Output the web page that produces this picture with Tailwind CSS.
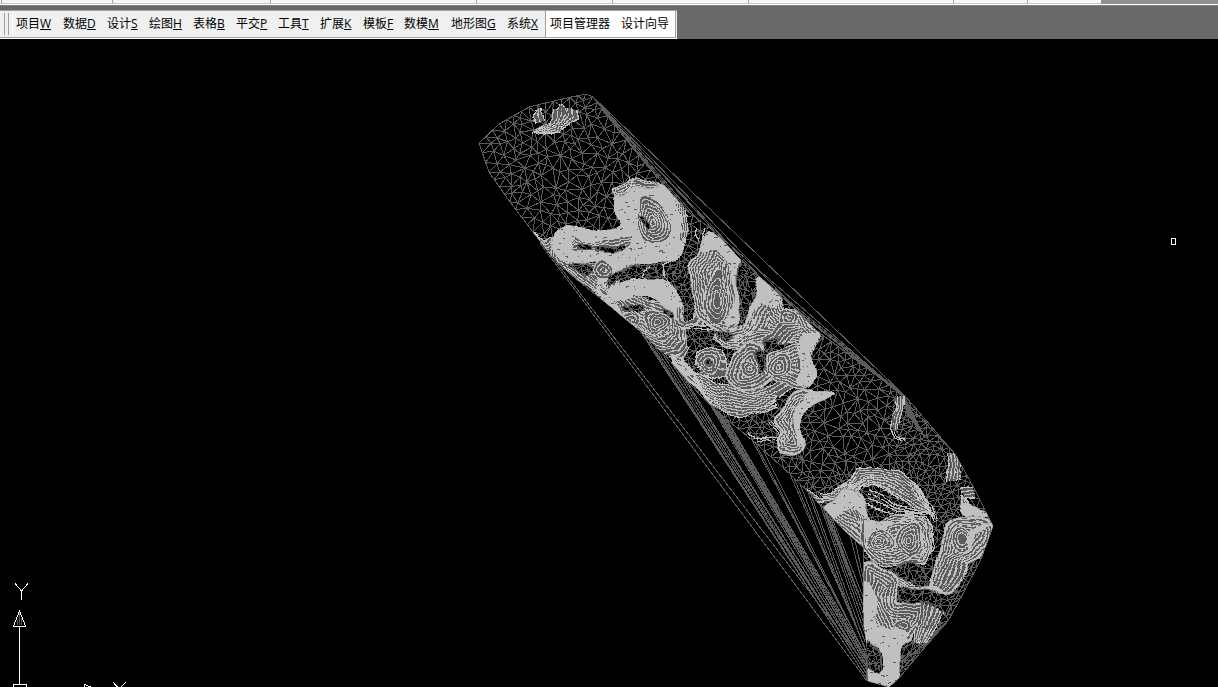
<!DOCTYPE html>
<html lang="zh-CN">
<head>
<meta charset="utf-8">
<title>项目管理器</title>
<script src="https://cdn.jsdelivr.net/npm/@tailwindcss/browser@4"></script>
</head>
<body class="w-[1218px] h-[687px] overflow-hidden bg-black flex flex-col font-['Open_Sans','Noto_Sans_CJK_SC',sans-serif]">
<div class="h-[5px] shrink-0 bg-[#f7f7f7] border-b border-white flex">
  <div class="w-0.5 h-1 border-r border-[#a0a0a0]"></div>
  <div class="w-[111px] h-1 border-r border-b border-r-[#a0a0a0] border-b-[#c8c8c8]"></div>
  <div class="w-[158px] h-1 border-r border-b border-r-[#a0a0a0] border-b-[#c8c8c8]"></div>
  <div class="w-[206px] h-1 border-r border-b border-r-[#a0a0a0] border-b-[#c8c8c8]"></div>
  <div class="w-[136px] h-1 border-r border-b border-r-[#a0a0a0] border-b-[#c8c8c8]"></div>
  <div class="w-[136px] h-1 border-r border-b border-r-[#a0a0a0] border-b-[#c8c8c8]"></div>
  <div class="w-[205px] h-1 border-r border-b border-r-[#a0a0a0] border-b-[#c8c8c8]"></div>
  <div class="w-[74px] h-1 border-r border-b border-r-[#a0a0a0] border-b-[#c8c8c8]"></div>
  <div class="w-[73px] h-1 border-b border-b-[#c8c8c8]"></div>
  <div class="flex-1 h-1 bg-[#909090]"></div>
</div>
<div class="h-[34px] shrink-0 bg-[#696969] border-t border-[#808080] pt-1">
  <nav class="w-[677px] h-[29px] bg-[#f0f0f0] border-t border-t-[#a0a0a0] border-b border-b-white flex text-[12px] leading-[25px] text-black whitespace-nowrap">
    <div class="w-4 shrink-0 flex gap-[3px] pl-1 py-0.5 border-b border-[#a0a0a0]"><i class="w-px h-[22px] bg-[#a0a0a0]"></i><i class="w-px h-[22px] bg-[#a0a0a0]"></i><i class="w-px h-[22px] bg-white"></i></div>
    <div class="flex w-[529px] shrink-0 border-b border-[#a0a0a0]">
      <span class="w-[47px]">项目<u>W</u></span><span class="w-[44px]">数据<u>D</u></span><span class="w-[42px]">设计<u>S</u></span><span class="w-[44px]">绘图<u>H</u></span><span class="w-[43px]">表格<u>B</u></span><span class="w-[42px]">平交<u>P</u></span><span class="w-[42px]">工具<u>T</u></span><span class="w-[43px]">扩展<u>K</u></span><span class="w-[41px]">模板<u>F</u></span><span class="w-[47px]">数模<u>M</u></span><span class="w-[56px]">地形图<u>G</u></span><span>系统<u>X</u></span>
    </div>
    <div class="flex w-[131px] bg-white border-l border-r border-b border-[#a0a0a0] pl-1"><span class="w-[71px]">项目管理器</span><span>设计向导</span></div>
  </nav>
</div>
<main class="h-[648px] shrink-0">
<svg id="map" class="block w-[1218px] h-[648px]" viewBox="0 39 1218 648" shape-rendering="crispEdges" fill="none">
  <defs>
    <clipPath id="core"><path id="coreShape"/></clipPath>
    <filter id="rough" filterUnits="userSpaceOnUse" x="470" y="85" width="530" height="602" color-interpolation-filters="sRGB">
      <feTurbulence type="fractalNoise" baseFrequency="0.055" numOctaves="1" seed="4"/>
      <feDisplacementMap in="SourceGraphic" scale="10" xChannelSelector="R" yChannelSelector="G"/>
    </filter>
  </defs>
  <g id="fans" stroke="#5c5c5c"></g>
  <path id="mesh" stroke="#5c5c5c"/>
  <g clip-path="url(#core)"><g id="relief" filter="url(#rough)"></g></g>
  <g stroke="#fff">
    <path d="M15.5 583v1l6 7v9M27.5 583v1l-6 7M19.5 626v59M13.500 684.500h13v8h-13zM13 626.500h13M13.500 626l6-15 6 15M84.500 690v-5.500l10 4M113 682l6 7 7-7"/>
    <path d="M17.500 625v-5M19.500 612v13M21.500 625v-7" stroke="#5c5c5c"/>
    <path d="M1171.500 238.500h4v6h-4z"/>
  </g>
</svg>
</main>
<script>
const LIGHT = '#c0c0c0', DARK = '#5c5c5c';
let seed = 20;
const rnd = () => (seed = (seed * 16807) % 2147483647) / 2147483647;
const pts = s => s.trim().split(/\s+/).map(p => p.split(',').map(Number));
const NS = 'http://www.w3.org/2000/svg';
const relief = document.getElementById('relief');
const add = (parent, name, attrs) => {
  const e = document.createElementNS(NS, name);
  for (const k in attrs) e.setAttribute(k, attrs[k]);
  parent.appendChild(e);
  return e;
};
const line = p => 'M' + p.map(q => q.join(' ')).join('L');
// Closed curve through every point
const smooth = p => {
  const n = p.length, at = i => p[(i + n) % n], k = 7;
  let d = 'M' + p[0].join(' ');
  for (let i = 0; i < n; i++) {
    const a = at(i - 1), b = at(i), c = at(i + 1), e = at(i + 2);
    d += `C${b[0] + (c[0] - a[0]) / k} ${b[1] + (c[1] - a[1]) / k} ${c[0] - (e[0] - b[0]) / k} ${c[1] - (e[1] - b[1]) / k} ${c[0]} ${c[1]}`;
  }
  return d + 'Z';
};
const inside = (p, x, y) => {
  let r = false;
  for (let i = 0, j = p.length - 1; i < p.length; j = i++)
    if ((p[i][1] > y) !== (p[j][1] > y) && x < (p[j][0] - p[i][0]) * (y - p[i][1]) / (p[j][1] - p[i][1]) + p[i][0]) r = !r;
  return r;
};

// Survey boundary
const core = pts('479,143 499,124 529,107 562,99 586,94 593,97 602,108 620,132 645,163 686,210 715,232 738,257 762,279 790,304 817,331 860,362 905,396 955,454 975,490 993,526 981,559 965,590 948,621 920,653 900,677 889,687 868,681 866,640 863,620 864,548 845,531 810,494 790,474 752,440 725,418 700,395 672,363 640,331 600,298 570,274 553,258 533,232 510,202 489,172');
document.getElementById('coreShape').setAttribute('d', line(core) + 'Z');

// Long thin triangles on both sides of the boundary
const fans = document.getElementById('fans');
const seg = (a, b, c, d) => add(fans, 'path', {d: `M${a} ${b}L${c} ${d}`});
seg(540, 243, 867, 681);
seg(550, 254, 868, 668);
[[640,331],[643,334],[649,341],[655,347],[660,350],[671,362],[675,365],[681,372],[708,401],[711,404],[714,408],[717,411],[719,413],[721,415],[723,417],[752,440],[756,444],[763,450],[790,474],[794,478],[800,484]].forEach(([x, y], i) => seg(x, y, 868 - i % 3, 680 - i * 1.4));
[[719,413],[722,416],[725,418],[727,420]].forEach(([x, y], i) => { seg(x, y, 866, 664 - i * 3); });
[[808,492],[811,495],[820,504],[823,508],[826,512],[829,515],[832,518],[850,535],[855,540]].forEach(([x, y], i) => seg(x, y, 865, 650 - i * 8));
[[823,508],[826,511],[829,514]].forEach(([x, y]) => seg(x, y, 863, 605));
for (let y = 640; y < 680; y += 3) seg(866, y, 868, 681);
[[593,97,905,396],[600,106,715,232],[600,106,700,222],[602,108,738,257],[602,110,690,213],[604,112,665,186],[606,114,762,279],[600,105,817,331],[715,232,900,393],[762,279,905,396],[780,296,905,397],[790,304,902,396],[805,318,905,396],[817,331,900,393],[905,396,955,454],[903,399,948,447],[990,532,946,618],[986,532,944,616],[948,621,899,672],[948,621,900,660],[944,622,902,650],[940,628,899,668],[936,634,899,678],[930,640,899,664]].forEach(s => seg(...s));
add(fans, 'path', {d: 'M905 398L925 438L907 412Z', fill: DARK});

// Delaunay triangulation of scattered survey points
const P = [];
for (let i = 0; i < core.length; i++) {
  const a = core[i], b = core[(i + 1) % core.length], n = Math.max(1, Math.round(Math.hypot(a[0] - b[0], a[1] - b[1]) / 9));
  for (let k = 0; k < n; k++) P.push([a[0] + (b[0] - a[0]) * k / n + rnd() * .1, a[1] + (b[1] - a[1]) * k / n + rnd() * .1]);
}
const gap = (x, y) => y < 235 ? 9.2 : (x > 800 && y < 470 && x < 890) ? 9.2 : (y < 450 ? 5.4 : 5.8);
for (let t = 0; t < 30000; t++) {
  const x = 478 + rnd() * 516, y = 94 + rnd() * 592;
  if (!inside(core, x, y)) continue;
  const g = gap(x, y) * (.62 + rnd() * .6);
  if (P.every(q => (q[0] - x) ** 2 + (q[1] - y) ** 2 > g * g)) P.push([x, y]);
}
P.sort((a, b) => a[0] - b[0]);
const N = P.length, Q = P.concat([[-5000, -5000], [6000, -5000], [700, 9000]]);
const tri = (a, b, c) => {
  const [ax, ay] = Q[a], [bx, by] = Q[b], [cx, cy] = Q[c], d = 2 * (ax * (by - cy) + bx * (cy - ay) + cx * (ay - by));
  const A = ax * ax + ay * ay, B = bx * bx + by * by, C = cx * cx + cy * cy;
  const x = (A * (by - cy) + B * (cy - ay) + C * (ay - by)) / d, y = (A * (cx - bx) + B * (ax - cx) + C * (bx - ax)) / d;
  return {v: [a, b, c], x, y, r: (ax - x) ** 2 + (ay - y) ** 2};
};
let open = [tri(N, N + 1, N + 2)], done = [];
for (let i = 0; i < N; i++) {
  const [x, y] = P[i], edges = new Map(), keep = [];
  for (const t of open) {
    const dx = x - t.x;
    if (dx > 0 && dx * dx > t.r) { done.push(t); continue; }
    if (dx * dx + (y - t.y) ** 2 < t.r) {
      for (const [a, b] of [[0, 1], [1, 2], [2, 0]]) {
        const u = Math.min(t.v[a], t.v[b]), v = Math.max(t.v[a], t.v[b]), k = u * 10000 + v;
        edges.has(k) ? edges.set(k, null) : edges.set(k, [u, v]);
      }
    } else keep.push(t);
  }
  open = keep;
  for (const e of edges.values()) if (e) open.push(tri(e[0], e[1], i));
}
let mesh = '';
const seen = new Set();
for (const t of done.concat(open)) {
  if (t.v.some(i => i >= N)) continue;
  const [a, b, c] = t.v.map(i => P[i]);
  if (!inside(core, (a[0] + b[0] + c[0]) / 3, (a[1] + b[1] + c[1]) / 3)) continue;
  for (const [i, j] of [[0, 1], [1, 2], [2, 0]]) {
    const u = Math.min(t.v[i], t.v[j]), v = Math.max(t.v[i], t.v[j]), k = u * 10000 + v;
    if (seen.has(k)) continue;
    seen.add(k);
    mesh += `M${P[u].map(n => n.toFixed(1)).join(' ')}L${P[v].map(n => n.toFixed(1)).join(' ')}`;
  }
}
document.getElementById('mesh').setAttribute('d', mesh + line(core) + 'Z');

// Relief drawing helpers
let clipId = 0;
const clip = d => {
  const c = add(document.querySelector('defs'), 'clipPath', {id: 'c' + (++clipId)});
  add(c, 'path', {d});
  return add(relief, 'g', {'clip-path': `url(#c${clipId})`});
};
const rings = (s, depth = 30, step = 3) => {
  const d = smooth(pts(s)), g = clip(d);
  add(g, 'path', {d, fill: DARK});
  for (let r = depth; r > 0; r -= step) {
    add(g, 'path', {d, stroke: LIGHT, 'stroke-width': 2 * r, 'stroke-linejoin': 'round'});
    add(g, 'path', {d, stroke: DARK, 'stroke-width': Math.max(0, 2 * r - 2.6), 'stroke-linejoin': 'round'});
  }
  add(g, 'path', {d, stroke: LIGHT, 'stroke-width': 2});
};
const solid = s => {
  const p = pts(s), d = smooth(p), g = clip(d);
  add(g, 'path', {d, fill: LIGHT});
  const xs = p.map(q => q[0]), ys = p.map(q => q[1]), x0 = Math.min(...xs), x1 = Math.max(...xs), y0 = Math.min(...ys), y1 = Math.max(...ys);
  for (let i = 0; i < (x1 - x0) * (y1 - y0) / 60; i++)
    add(g, 'rect', {x: Math.round(x0 + rnd() * (x1 - x0)), y: Math.round(y0 + rnd() * (y1 - y0)), width: rnd() < .3 ? 3 : 1, height: 1, fill: DARK});
};
const hill = (x, y, rx, ry, rot = 0, step = 3, hole = 2) => {
  const f = k => {
    let s = [];
    for (let i = 0; i < 14; i++) {
      const a = i / 14 * 6.2832, w = k * (1 + .07 * Math.sin(a * 3 + x) + .05 * Math.cos(a * 2 + y));
      const u = rx * w * Math.cos(a), v = ry * w * Math.sin(a), c = Math.cos(rot), q = Math.sin(rot);
      s.push([x + u * c - v * q, y + u * q + v * c]);
    }
    return smooth(s);
  };
  add(relief, 'path', {d: f(1), fill: DARK});
  const m = Math.min(rx, ry);
  for (let r = m; r > hole; r -= step) add(relief, 'path', {d: f(r / m), stroke: LIGHT, 'stroke-width': 1.2});
};
const sweep = (a, b, n, base) => {
  const p = pts(a), q = pts(b);
  if (base) add(relief, 'path', {d: line(p.concat(q.slice().reverse())) + 'Z', fill: DARK});
  for (let k = 0; k < n; k++) {
    const t = n > 1 ? k / (n - 1) : 0;
    add(relief, 'path', {d: line(p.map((v, i) => [(v[0] * (1 - t) + q[i][0] * t + (rnd() - .5) * .8).toFixed(1), (v[1] * (1 - t) + q[i][1] * t + (rnd() - .5) * .8).toFixed(1)])), stroke: LIGHT, 'stroke-width': 1.2, 'stroke-linejoin': 'round'});
  }
};
// Exposes the triangulation in a flat pocket between contours
const pocket = s => {
  const d = smooth(pts(s)), g = clip(d);
  add(g, 'path', {d, fill: '#000'});
  add(g, 'path', {d: mesh, stroke: DARK});
  add(g, 'path', {d, stroke: DARK, 'stroke-width': 2});
};

// Northern knoll
sweep('532,132 541,127 549,121 551,114 552,107', '543,135 560,130 571,124 579,119 578,109', 7, true);
sweep('536,123 532,118 536,112', '543,121 541,115 541,109', 3, true);
sweep('553,109 557,107 559,102', '568,113 566,108 562,103', 3, true);

// Northern horseshoe ridge
sweep('531,229 538,237 545,240 553,236', '534,240 545,252 553,258 562,250', 7, true);
rings('553,238 556,238 566,250 590,262 612,266 625,268 612,300 590,290 567,272 553,260', 24);
solid('617,193 628,183 645,179 662,186 677,199 686,217 687,237 676,262 655,263 640,264 622,272 609,283 608,296 597,290 598,263 580,262 562,260 553,248 557,232 566,225 590,228 606,229 617,226 619,222 614,210 614,200');
rings('617,197 614,190 622,184 634,177 646,179 660,185 655,190 637,187 625,195', 9, 3);
hill(653, 222, 16, 24, -.4, 2.3, 2);
sweep('666,186 677,202 681,219 679,240', '672,188 684,204 687,222 686,242', 4, true);
pocket('639,215 644,215 650,223 649,228 643,222');
sweep('570,242 573,237 592,243 620,238 632,236', '573,250 576,251 595,251 620,252 631,246', 5, true);
pocket('577,244 590,245 590,250 578,248');
pocket('594,247 605,248 624,246 622,252 597,252');
sweep('628,176 625,189 617,198', '631,179 630,188 625,197', 2);
pocket('568,266 576,262 590,263 594,270 586,276 577,272');
hill(603, 270, 8, 10, 0, 3, 1);

// Second ridge with the twin knolls
pocket('609,276 628,268 645,264 665,264 676,262 690,262 690,287 678,288 660,278 640,276 621,280 611,288');
sweep('652,266 645,270 643,276 648,278', '674,262 664,267 664,277 670,283', 2);
rings('598,284 610,291 625,286 650,300 680,304 686,335 686,352 678,363 660,350 640,331 612,306 598,296', 36);
solid('611,290 625,281 645,278 665,281 677,291 681,307 678,320 669,312 658,301 642,295 626,297 617,301 608,297');
pocket('622,305 640,305 646,311 640,313 624,309');
pocket('663,305 672,312 672,318 664,312');
hill(631, 319, 9, 9, 0, 3, 1);
hill(656, 322, 13, 12, .2, 3, 1);
sweep('636,330 645,334 660,337 673,333', '672,361 676,358 683,356 688,347', 8, true);
solid('596,287 607,296 618,306 636,324 630,324 614,310 598,298');

// Central hill
sweep('696,228 695,236 699,242', '706,228 704,234 702,241', 2);
sweep('680,309 681,317 687,321 696,318 696,310', '675,310 676,323 687,327 702,325 704,310', 3, true);
rings('711,231 724,242 739,257 737,290 739,320 724,332 704,323 695,308 692,288 689,270 698,254 703,241', 26, 2.7);
hill(716, 300, 11, 28, .06, 2.6, 1);
solid('711,231 724,243 738,257 736,285 739,318 730,326 725,324 732,305 731,270 716,252 702,253 703,242');
sweep('684,325 700,325 717,326', '684,328 700,328 717,330', 2);
pocket('739,262 760,281 752,303 744,318 739,312 737,290');

// Eastern ridge
rings('760,278 775,290 785,309 800,312 818,334 808,360 795,348 778,350 760,347 745,351 726,349 713,338 725,329 744,325 752,304', 28, 2.8);
solid('760,279 768,286 778,296 779,304 772,308 762,302 757,311 749,322 753,301');
hill(787, 318, 9, 8, 0, 3, 1);
sweep('722,347 738,345 749,337 760,322', '722,336 738,336 744,328 752,314', 4);
sweep('762,340 772,334 780,322 796,323', '780,350 788,344 793,336 806,331', 6, true);
pocket('717,333 728,330 733,336 725,341');
pocket('760,344 780,337 778,344 795,345 792,352 778,353 763,361 756,352');

// Southern foothills
sweep('668,354 682,356 692,373 712,381 733,388 752,390 776,384 797,378', '672,362 700,394 711,405 728,415 745,417 755,413 775,409 770,405', 11, true);
sweep('672,362 676,355 684,357 688,365', '679,363 682,361 686,364 688,368', 2);
sweep('797,372 780,379 765,389', '812,382 793,389 780,397', 4, true);
sweep('694,366 697,353 708,348 721,352 727,364', '700,376 712,379 722,375 730,373 734,380', 5, true);
hill(708, 363, 12, 12, .2, 3.2, 2);
pocket('705,360 712,360 713,366 707,367');
rings('731,362 741,347 752,341 763,345 766,362 776,374 755,390 735,389 727,378', 17, 3);
hill(748, 369, 8, 8, 0, 3, 1);
pocket('756,351 764,351 766,366 759,374');
rings('768,356 785,349 805,342 812,354 812,382 800,389 788,384 773,378', 22, 3);
hill(779, 366, 11, 10, 0, 2.8, 1);
solid('797,348 804,332 818,334 812,350 815,379 803,387 796,380 801,365');

// Crescent
rings('775,420 786,402 797,391 813,389 832,394 815,405 802,416 800,430 805,441 800,453 780,453 776,440 783,430', 16, 2.8);
solid('803,394 813,390 834,394 816,404 803,415 800,430 805,442 799,447 795,430 795,412 802,402');
sweep('748,434 760,438 777,438 784,446', '751,440 765,441 776,442 780,449', 2);
sweep('770,424 777,430 783,440', '776,420 784,428 788,440', 3);

// Small eastern features
sweep('896,398 898,407 893,416 892,428', '905,397 905,407 902,418 899,430', 4, true);
sweep('891,428 896,436 906,439', '894,428 899,435 906,437', 2);
sweep('948,454 946,466 948,480', '959,457 958,468 961,481', 5, true);
sweep('961,489 974,489', '963,498 976,498', 4, true);

// South-western slope
sweep('819,493 831,491 847,484 858,468 877,466 897,472 917,482 922,492', '835,510 850,504 860,486 875,484 889,492 903,502 920,510 936,519', 9, true);
sweep('868,490 884,496 896,506 910,509 930,509', '866,505 884,511 899,514 912,514 932,515', 4);
sweep('920,486 924,498 934,508 938,520', '912,482 916,498 928,508 935,524', 3);
sweep('808,492 820,498 833,497', '817,502 831,502 843,496', 3, true);
rings('822,513 836,497 849,489 862,499 870,518 868,548 848,532', 21, 2.7);
solid('822,514 836,499 849,490 858,498 866,508 868,518 852,508 842,512 834,522');

// Southern double summit
rings('863,520 879,520 893,515 914,515 929,524 932,545 925,563 906,563 893,567 870,560 862,545', 28, 2.7);
hill(880, 541, 13, 13, 0, 2.5, 1);
hill(909, 540, 14, 18, .1, 2.8, 1);
solid('866,522 883,520 895,523 886,528 874,528 866,540');
sweep('905,515 925,517 933,529 934,550 924,565', '899,522 918,523 924,533 926,548 918,562', 3);

// South-eastern ridge
sweep('960,507 960,494', '975,513 966,500', 5, true);
solid('961,504 976,507 988,517 977,521 965,516 960,510');
rings('940,548 943,531 953,519 974,518 995,525 990,543 979,558 968,562 963,577 950,594 929,590 934,569', 22, 2.8);
hill(963, 539, 12, 12, 0, 3, 3);
sweep('931,586 940,572 946,558 956,552', '950,593 960,578 966,562 978,556', 7, true);
solid('970,531 982,525 993,525 979,532 974,547 969,549');

// Southern valley
sweep('863,562 881,567 893,575 914,585 938,589', '868,568 877,580 890,581 906,590 944,592', 5, true);
rings('865,563 884,568 900,583 897,602 923,604 923,620 909,640 885,641 876,625 864,600', 26, 3);
pocket('894,568 908,562 924,568 927,586 910,582 898,579');
pocket('900,590 922,588 940,596 937,606 922,603 902,603');
sweep('922,603 919,620 915,640', '942,611 936,628 926,643', 7, true);
hill(904, 627, 8, 6, .3, 3, 1);
solid('863,582 872,585 878,598 877,622 888,628 908,634 901,650 900,676 890,688 867,683 867,668 879,674 883,660 878,645 863,640 862,610');
pocket('866,641 875,644 880,652 880,664 877,670 868,668');
</script>
</body>
</html>
